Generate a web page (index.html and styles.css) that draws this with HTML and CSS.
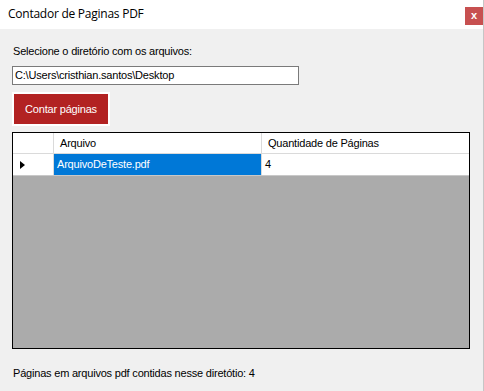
FILE: index.html
```html
<!DOCTYPE html>
<html>
<head lang="pt">
    <meta charset="UTF-8">
    <title>Contador de Paginas PDF</title>
    <link rel="stylesheet" href="styles.css">
</head>
<body>
<div id="window">
    <div id="titlebar">
        <span class="title">Contador de Paginas PDF</span>
        <span class="close">x</span>
    </div>
    <div id="content">
        <div class="label">Selecione o diretório com os arquivos:</div>
        <div class="textbox">C:\Users\cristhian.santos\Desktop</div>
        <div class="button"><span>Contar páginas</span></div>
        <div id="grid">
            <div class="row header">
                <div class="cell rowhead"></div>
                <div class="cell col1">Arquivo</div>
                <div class="cell col2">Quantidade de Páginas</div>
            </div>
            <div class="row">
                <div class="cell rowhead"><span class="arrow"></span></div>
                <div class="cell col1 selected">ArquivoDeTeste.pdf</div>
                <div class="cell col2">4</div>
            </div>
        </div>
        <div class="status">Páginas em arquivos pdf contidas nesse diretótio: 4</div>
    </div>
</div>
</body>
</html>
```

FILE: styles.css
```css
* {
    padding: 0;
    margin: 0;
    box-sizing: border-box;
}

body {
    background: #f0f0f0;
    font-family: "Liberation Sans", Arial, sans-serif;
    font-size: 11px;
    letter-spacing: -0.2px;
    color: #000;
}

#window {
    width: 484px;
    height: 391px;
    background: #f0f0f0;
    border-right: 1px solid #c6c6c6;
    margin-right: 1px;
    display: flex;
    flex-direction: column;
}

#titlebar {
    height: 29px;
    background: #fff;
    display: flex;
    align-items: flex-start;
    justify-content: space-between;
}

#titlebar .title {
    font-family: "Open Sans", "Noto Sans", sans-serif;
    font-size: 12px;
    letter-spacing: -0.25px;
    line-height: 16px;
    margin: 6px 0 0 8px;
}

#titlebar .close {
    width: 18px;
    height: 18px;
    margin: 7px 0 0 0;
    background: #c75050;
    color: #fff;
    font-weight: bold;
    font-size: 11px;
    letter-spacing: 0;
    line-height: 16px;
    text-align: center;
}

#content {
    padding: 16px 0 0 12px;
}

.label {
    line-height: 13px;
    padding-left: 1px;
}

.textbox {
    width: 287px;
    height: 19px;
    margin-top: 8px;
    background: #fff;
    border: 1px solid #7a7a7a;
    padding: 2px 0 0 2px;
    line-height: 13px;
}

.button {
    width: 98px;
    height: 34px;
    margin-top: 7px;
    border: 2px solid #fff;
    background: #b22222;
    color: #fff;
    display: flex;
    align-items: center;
    justify-content: center;
}

#grid {
    width: 458px;
    height: 217px;
    margin-top: 6px;
    border: 1px solid #000;
    background: #ababab;
}

.row {
    display: flex;
    height: 22px;
    background: #fff;
    border-bottom: 1px solid #c8c8c8;
}

.row.header {
    height: 21px;
    border-bottom: 1px solid #dadada;
}

.cell {
    line-height: 20px;
    white-space: nowrap;
    overflow: hidden;
    border-right: 1px solid #dadada;
}

.rowhead {
    width: 41px;
    position: relative;
}

.col1 {
    width: 208px;
    padding-left: 3px;
}

.header .col1 {
    padding-left: 6px;
}

.col2 {
    flex: 1;
    padding-left: 3px;
    border-right: none;
}

.header .col2 {
    padding-left: 6px;
}

.selected {
    background: #0078d7;
    color: #fff;
}

.arrow {
    position: absolute;
    left: 7px;
    top: 7px;
    width: 0;
    height: 0;
    border-top: 4px solid transparent;
    border-bottom: 4px solid transparent;
    border-left: 5px solid #000;
}

.status {
    margin-top: 18px;
    padding-left: 1px;
    line-height: 13px;
}
```
